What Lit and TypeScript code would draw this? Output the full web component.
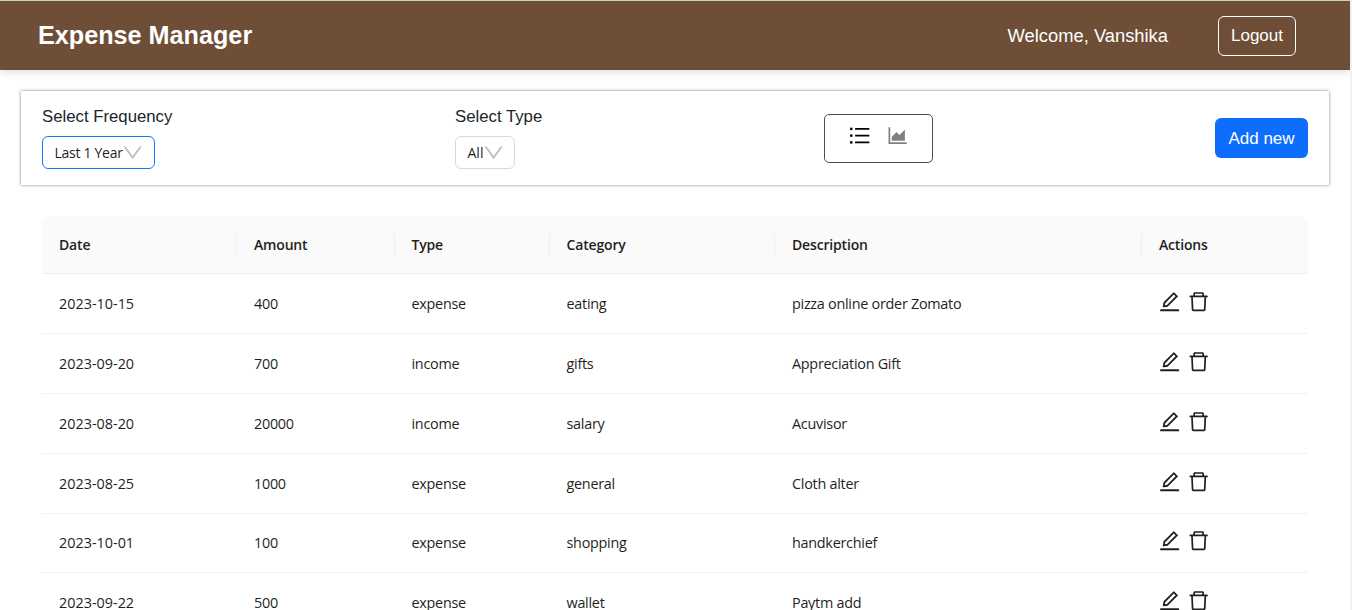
import { LitElement, html, css, svg } from "lit";
import { customElement } from "lit/decorators.js";

const icons = {
  edit: "M257.7 752c2 0 4-.2 6-.5L431.9 722c2-.4 3.9-1.3 5.3-2.8l423.9-423.9a9.96 9.96 0 000-14.1L694.9 114.9c-1.9-1.9-4.4-2.9-7.1-2.9s-5.2 1-7.1 2.9L256.8 538.8c-1.5 1.5-2.4 3.3-2.8 5.3l-29.5 168.2a33.5 33.5 0 009.4 29.8c6.6 6.4 14.9 9.9 23.8 9.9zm67.4-174.4L687.8 215l73.3 73.3-362.7 362.6-88.9 15.7 15.6-89zM880 836H144c-17.7 0-32 14.3-32 32v36c0 4.4 3.6 8 8 8h784c4.4 0 8-3.6 8-8v-36c0-17.7-14.3-32-32-32z",
  trash: "M360 184h-8c4.4 0 8-3.6 8-8v8h304v-8c0 4.4 3.6 8 8 8h-8v72h72v-80c0-35.3-28.7-64-64-64H352c-35.3 0-64 28.7-64 64v80h72v-72zm504 72H160c-17.7 0-32 14.3-32 32v32c0 4.4 3.6 8 8 8h60.4l24.7 523c1.6 34.1 29.8 61 63.9 61h454c34.2 0 62.3-26.8 63.9-61l24.7-523H888c4.4 0 8-3.6 8-8v-32c0-17.7-14.3-32-32-32zM731.3 840H292.7l-24.2-512h487l-24.2 512z",
  list: "M912 192H328c-4.4 0-8 3.6-8 8v56c0 4.4 3.6 8 8 8h584c4.4 0 8-3.6 8-8v-56c0-4.4-3.6-8-8-8zm0 284H328c-4.4 0-8 3.6-8 8v56c0 4.4 3.6 8 8 8h584c4.4 0 8-3.6 8-8v-56c0-4.4-3.6-8-8-8zm0 284H328c-4.4 0-8 3.6-8 8v56c0 4.4 3.6 8 8 8h584c4.4 0 8-3.6 8-8v-56c0-4.4-3.6-8-8-8zM104 228a56 56 0 10112 0 56 56 0 10-112 0zm0 284a56 56 0 10112 0 56 56 0 10-112 0zm0 284a56 56 0 10112 0 56 56 0 10-112 0z",
  chart: "M888 792H200V168c0-4.4-3.6-8-8-8h-56c-4.4 0-8 3.6-8 8v688c0 4.4 3.6 8 8 8h752c4.4 0 8-3.6 8-8v-56c0-4.4-3.6-8-8-8zm-616-64h536c4.4 0 8-3.6 8-8V284c0-7.2-8.7-10.7-13.7-5.7L592 488.6l-125.4-124a8.03 8.03 0 00-11.3 0l-189 189.6a7.87 7.87 0 00-2.3 5.6V720c0 4.4 3.6 8 8 8z",
  down: "M884 256h-75c-5.1 0-9.9 2.5-12.9 6.6L512 654.2 227.9 262.6c-3-4.1-7.8-6.6-12.9-6.6h-75c-6.5 0-10.3 7.4-6.5 12.7l352.6 486.1c12.8 17.6 39 17.6 51.7 0l352.6-486.1c3.9-5.3.1-12.7-6.4-12.7z",
};

const icon = (name: keyof typeof icons) =>
  html`<svg class="icon ${name}" viewBox="64 64 896 896" fill="currentColor">${svg`<path d=${icons[name]}></path>`}</svg>`;

const columns = ["Date", "Amount", "Type", "Category", "Description", "Actions"];

const rows = [
  ["2023-10-15", "400", "expense", "eating", "pizza online order Zomato"],
  ["2023-09-20", "700", "income", "gifts", "Appreciation Gift"],
  ["2023-08-20", "20000", "income", "salary", "Acuvisor"],
  ["2023-08-25", "1000", "expense", "general", "Cloth alter"],
  ["2023-10-01", "100", "expense", "shopping", "handkerchief"],
  ["2023-09-22", "500", "expense", "wallet", "Paytm add"],
];

@customElement("app-root")
export class AppRoot extends LitElement {
  static styles = css`
    :host {
      display: flex;
      height: 610px;
      overflow: hidden;
      background: #fff;
      color: #212529;
      font-family: "Liberation Sans", Arial, sans-serif;
    }
    * { box-sizing: border-box; }
    .page { flex: 1; min-width: 0; height: 610px; overflow: hidden; }
    .track { width: 2px; background: #f1f1f1; }
    .header {
      display: flex;
      align-items: center;
      height: 70px;
      padding: 0 54px 0 38px;
      border-top: 1px solid #c8d3c3;
      background: #6e4e37;
      color: #fff;
      box-shadow: 0 2px 8px rgba(0, 0, 0, 0.15);
    }
    .brand { flex: 1; font-size: 25.2px; font-weight: 700; line-height: 30px; padding-bottom: 1px; }
    .welcome { font-size: 18.35px; line-height: 24px; margin-right: 50px; }
    .logout {
      width: 78px;
      height: 40px;
      border: 1px solid #fff;
      border-radius: 6px;
      font: inherit;
      font-size: 17px;
      color: #fff;
      background: transparent;
      padding: 0;
    }
    .filters {
      display: flex;
      height: 94px;
      margin: 21px 21px 0;
      padding: 0 21px;
      box-shadow: 0 0 3px rgba(0, 0, 0, 0.5);
    }
    .field { width: 413px; padding-top: 14px; }
    .label { font-size: 16.75px; line-height: 24px; height: 31px; }
    .select {
      display: flex;
      align-items: center;
      height: 33px;
      padding: 0 11.5px;
      border: 1px solid #d9d9d9;
      border-radius: 6px;
      font-family: "Open Sans", "Noto Sans", sans-serif;
      font-size: 14px;
      color: #1f1f1f;
      white-space: nowrap;
    }
    .frequency { width: 113px; border-color: #1677ff; }
    .type { width: 60px; }
    .icon { display: block; flex: none; width: 21.3px; height: 21.3px; }
    .select .icon { margin-left: -0.8px; color: #bfbfbf; }
    .frequency span { letter-spacing: -0.28px; }
    .views {
      display: flex;
      gap: 16.4px;
      width: 109px;
      height: 49px;
      margin: 23px 0 0 -44px;
      padding: 10px 0 0 24px;
      border: 1px solid #4d4d4d;
      border-radius: 5px;
      color: #000;
    }
    .views .chart { color: #808080; }
    .add {
      width: 93px;
      height: 40px;
      margin: 27px 0 0 auto;
      border: 0;
      border-radius: 6px;
      background: #0d6efd;
      color: #fff;
      font: inherit;
      font-size: 17px;
      padding: 2px 0 0;
    }
    .table {
      margin: 31px 42px 0;
      font-family: "Open Sans", "Noto Sans", sans-serif;
      font-size: 14.4px;
      color: #1f1f1f;
    }
    .row {
      display: grid;
      grid-template-columns: 195px 157.5px 155px 225.5px 367px 166px;
      align-items: center;
      height: 59.88px;
      border-bottom: 1px solid #f0f0f0;
    }
    .head {
      height: 58px;
      background: #fafafa;
      border-radius: 9px 9px 0 0;
      font-size: 14px;
      font-weight: 600;
    }
    .cell { padding: 1px 0 0 17px; line-height: 24px; letter-spacing: -0.27px; white-space: nowrap; }
    .cell:first-child { letter-spacing: 0; }
    .head .cell, .head .cell:first-child { padding-top: 0; border-right: 1px solid #f0f0f0; letter-spacing: -0.17px; }
    .head .cell:last-child { border-right: 0; }
    .row .actions { display: flex; gap: 7.7px; padding: 0 0 3.84px 17px; }
  `;

  render() {
    return html`
      <main class="page">
        <header class="header">
          <div class="brand">Expense Manager</div>
          <div class="welcome">Welcome, Vanshika</div>
          <button class="logout">Logout</button>
        </header>
        <section class="filters">
          <div class="field">
            <div class="label">Select Frequency</div>
            <div class="select frequency"><span>Last 1 Year</span>${icon("down")}</div>
          </div>
          <div class="field">
            <div class="label">Select Type</div>
            <div class="select type"><span>All</span>${icon("down")}</div>
          </div>
          <div class="views">${icon("list")}${icon("chart")}</div>
          <button class="add">Add new</button>
        </section>
        <section class="table">
          <div class="row head">${columns.map((c) => html`<div class="cell">${c}</div>`)}</div>
          ${rows.map(
            (r) => html`<div class="row">
              ${r.map((c) => html`<div class="cell">${c}</div>`)}
              <div class="cell actions">${icon("edit")}${icon("trash")}</div>
            </div>`
          )}
        </section>
      </main>
      <div class="track"></div>
    `;
  }
}
